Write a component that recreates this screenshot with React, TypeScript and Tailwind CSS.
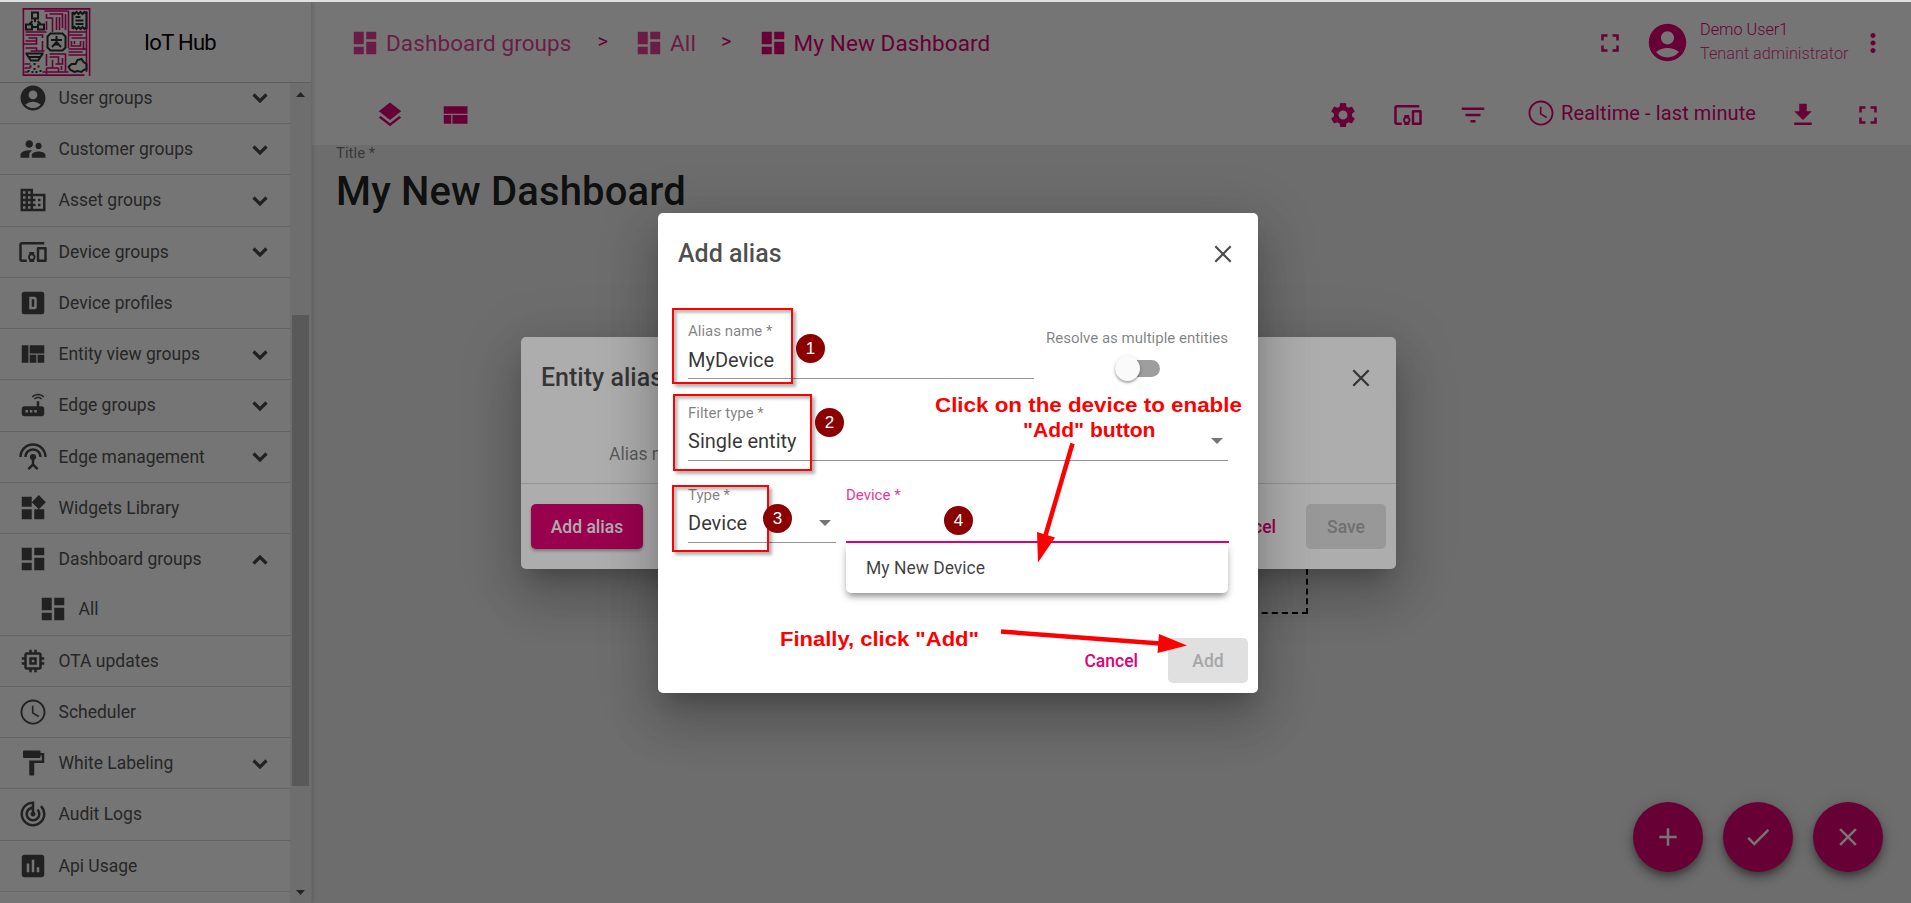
import type { ReactNode } from 'react';
import type { IconType } from 'react-icons';
import {
  MdAccountCircle,
  MdAdd,
  MdCheck,
  MdClose,
  MdDashboard,
  MdDevicesOther,
  MdDomain,
  MdFilterList,
  MdFullscreen,
  MdInsertChart,
  MdMemory,
  MdMoreVert,
  MdSettings,
  MdSettingsInputAntenna,
  MdSupervisorAccount,
  MdTrackChanges,
  MdViewQuilt,
  MdWidgets,
} from 'react-icons/md';

type GlyphProps = { className?: string; size?: number };

const glyph = (d: string) =>
  function Glyph({ className, size = 30 }: GlyphProps) {
    return (
      <svg viewBox="0 0 24 24" width={size} height={size} fill="currentColor" fillRule="evenodd" className={className}>
        <path d={d} />
      </svg>
    );
  };

const RouterIcon = glyph(
  'M20.2 5.9l.8-.8C19.6 3.7 17.8 3 16 3s-3.6.7-5 2.1l.8.8C13 4.8 14.5 4.2 16 4.2s3 .6 4.2 1.7zm-.9.8c-.9-.9-2.1-1.4-3.3-1.4s-2.4.5-3.3 1.4l.8.8c.7-.7 1.6-1 2.5-1 .9 0 1.8.3 2.5 1l.8-.8zM19 13h-2V9h-2v4H5c-1.1 0-2 .9-2 2v4c0 1.1.9 2 2 2h14c1.1 0 2-.9 2-2v-4c0-1.1-.9-2-2-2zM8 18H6v-2h2v2zm3.5 0h-2v-2h2v2zm3.5 0h-2v-2h2v2z',
);
const ProfileIcon = glyph(
  'M9 7h4a2 2 0 0 1 2 2v6a2 2 0 0 1-2 2H9zM11 9v6h2V9zM5 3h14a2 2 0 0 1 2 2v14a2 2 0 0 1-2 2H5a2 2 0 0 1-2-2V5a2 2 0 0 1 2-2z',
);
const ClockIcon = glyph(
  'M11.99 2C6.47 2 2 6.48 2 12s4.47 10 9.99 10C17.52 22 22 17.52 22 12S17.52 2 11.99 2zM12 20.5c-4.7 0-8.5-3.8-8.5-8.5S7.3 3.5 12 3.5s8.5 3.8 8.5 8.5-3.8 8.5-8.5 8.5zM12.4 7h-1.3v6l5.1 3.1.7-1.1-4.5-2.7z',
);
const RollerIcon = glyph(
  'M18 4V3c0-.55-.45-1-1-1H5c-.55 0-1 .45-1 1v4c0 .55.45 1 1 1h12c.55 0 1-.45 1-1V6h1v4H9v11c0 .55.45 1 1 1h2c.55 0 1-.45 1-1v-9h8V4h-3z',
);
const DownloadIcon = glyph('M19 9h-4V3H9v6H5l7 7 7-7zM5 18v2h14v-2H5z');
const CompactIcon = glyph('M3 19h6v-7H3v7zm7 0h12v-7H10v7zM3 5v6h19V5H3z');
const LayersIcon = glyph(
  'M11.99 18.54l-7.37-5.73L3 14.07l9 7 9-7-1.63-1.27-7.38 5.74zM12 16l7.36-5.73L21 9l-9-7-9 7 1.63 1.27L12 16z',
);

type NavEntry = {
  label: string;
  icon: IconType | typeof RouterIcon;
  arrow?: 'down' | 'up';
};

const NAV: NavEntry[] = [
  { label: 'User groups', icon: MdAccountCircle, arrow: 'down' },
  { label: 'Customer groups', icon: MdSupervisorAccount, arrow: 'down' },
  { label: 'Asset groups', icon: MdDomain, arrow: 'down' },
  { label: 'Device groups', icon: MdDevicesOther, arrow: 'down' },
  { label: 'Device profiles', icon: ProfileIcon },
  { label: 'Entity view groups', icon: MdViewQuilt, arrow: 'down' },
  { label: 'Edge groups', icon: RouterIcon, arrow: 'down' },
  { label: 'Edge management', icon: MdSettingsInputAntenna, arrow: 'down' },
  { label: 'Widgets Library', icon: MdWidgets },
  { label: 'Dashboard groups', icon: MdDashboard, arrow: 'up' },
  { label: 'OTA updates', icon: MdMemory },
  { label: 'Scheduler', icon: ClockIcon },
  { label: 'White Labeling', icon: RollerIcon, arrow: 'down' },
  { label: 'Audit Logs', icon: MdTrackChanges },
  { label: 'Api Usage', icon: MdInsertChart },
];

function Logo() {
  return (
    <svg viewBox="0 0 68 68" width={69} height={68} fill="none" className="shrink-0">
      <g stroke="#e20074" strokeWidth="1.6">
        <path d="M0 .9H68M.9 0V68M0 67.1H62M67.1 0V68M64 3V64M46 3V40M22 3H46M24 6V10H30V24M27 6H40V20M34 9V22M37 9V22M43 6V22M24 13V22M3 24H24M3 27H20V30M3 33H14M6 30H14V36H3M20 33V43M3 40H14V43M8 43H22M0 36H8M46 24H64M46 27H60M49 30H64M49 33V38H58V33M52 33V36M61 33V42M46 41H64M46 44H60M46 47H64M24 46V58M27 46H43V50M27 49H36V56M30 52V60M24 60H36M33 56H40V50M43 50V64M20 64H46M39 58V62M36 64V60M24 66V60M2 56H8M2 60H8M2 64H6" />
      </g>
      <g stroke="#303030" strokeWidth="2">
        <path d="M9.5 4.5h6v6h-6zM3.500 16.500h6v5h-6zM15.500 16.500h6v5h-6zM12.500 11v3M10.500 19h4M10 13l-3 3M15 13l3 3" />
        <path d="M50 4v17M64 4v17M50 4l2 2 2-2 2 2 2-2 2 2 2-2 2 2M50 21l2-2 2 2 2-2 2 2 2-2 2 2 2-2M53 9h5M53 12.500h8M53 16h8" />
        <path d="M28 25.500h12l3 3v11l-3 3H28l-3-3v-11z" />
        <path d="M28.500 32h11M34 28v6M34 34l-4.500 5M34 34l4.500 5M31 36.500h6" />
        <path d="M3 45.500h18M5 49h14M7.500 52.500h9M4 46l4 6M20 46l-4 6" />
        <path d="M12 55v2M8 57.500v2M16 57.500v2M12 60v2M6 62v2M18 62v2M10 63v2M14 63v2" />
        <path d="M48 62l-2-3 3-3 4 0 2-4 4-1 2 3 3 2v5l-3 1-2 2-4-1-3 1z" />
      </g>
    </svg>
  );
}

function Chevron({ up }: { up?: boolean }) {
  return (
    <svg width="30" height="30" viewBox="0 0 30 30" fill="none" className="mt-px stroke-current" strokeWidth="3.2">
      <path d={up ? 'M8.500 18.500L15 12L21.500 18.500' : 'M8.500 11.500L15 18L21.500 11.500'} />
    </svg>
  );
}

function NavItem({ entry }: { entry: NavEntry }) {
  const Icon = entry.icon;
  return (
    <div className="flex h-[50.25px] items-center pl-[18px] pr-[15px]">
      <Icon size={30} className="shrink-0" />
      <span className="ml-[10.500px] flex-1 text-[17.500px] leading-6 text-[#555]">{entry.label}</span>
      {entry.arrow && <Chevron up={entry.arrow === 'up'} />}
    </div>
  );
}

function Sidebar() {
  return (
    <aside className="z-10 flex w-[312px] shrink-0 flex-col border-r border-black/10 bg-white shadow-[0_0_5px_rgba(0,0,0,0.2)]">
      <div className="flex h-[81px] shrink-0 items-center border-b border-black/20 pl-[22px] pb-[1px]">
        <Logo />
        <span className="ml-[53px] mt-[3px] text-[22px] leading-8 tracking-[-0.7px]">IoT Hub</span>
      </div>
      <div className="flex min-h-0 flex-1">
        <nav className="-mt-[10.250px] flex-1 self-start text-[#4a4a4a] [clip-path:inset(10.250px_0_0_0)]">
          {NAV.map((entry) => (
            <div key={entry.label} className="border-b border-black/15">
              <NavItem entry={entry} />
              {entry.arrow === 'up' && (
                <div className="flex h-[50.25px] items-center pl-[38px]">
                  <MdDashboard size={30} />
                  <span className="ml-[10.500px] text-[17.500px] leading-6 text-[#555]">All</span>
                </div>
              )}
            </div>
          ))}
        </nav>
        <div className="flex w-[21px] flex-col items-center bg-[#f1f1f1]">
          <svg width="9" height="5" viewBox="0 0 9 5" className="mt-[9px] fill-[#505050]">
            <path d="M0 5L4.500 0L9 5z" />
          </svg>
          <div className="mt-[218px] h-[471px] w-[17px] bg-[#c1c1c1]" />
          <svg width="9" height="5" viewBox="0 0 9 5" className="mt-[104px] fill-[#505050]">
            <path d="M0 0L4.500 5L9 0z" />
          </svg>
        </div>
      </div>
    </aside>
  );
}

function TopBar() {
  return (
    <div className="flex h-[81px] items-center justify-between bg-white pl-[38px] pr-[23px] text-[#e20074]">
      <div className="flex items-center text-[22.500px] leading-8 tracking-[0.1px]">
        <div className="flex items-center opacity-75">
          <MdDashboard size={30} />
          <span className="ml-[6px]">Dashboard groups</span>
        </div>
        <span className="ml-[26px] -mt-[4px] text-[20px]">&gt;</span>
        <div className="ml-[26px] flex items-center opacity-75">
          <MdDashboard size={30} />
          <span className="ml-[6px]">All</span>
        </div>
        <span className="ml-[25px] -mt-[4px] text-[20px]">&gt;</span>
        <div className="ml-[26px] flex items-center">
          <MdDashboard size={30} />
          <span className="ml-[6px]">My New Dashboard</span>
        </div>
      </div>
      <div className="flex items-center">
        <MdFullscreen size={30} />
        <MdAccountCircle size={45} className="ml-[20px]" />
        <div className="-mt-[2px] ml-[10px] w-[158px] text-[16.250px] font-light leading-6">
          <div>Demo User1</div>
          <div className="opacity-80">Tenant administrator</div>
        </div>
        <MdMoreVert size={30} />
      </div>
    </div>
  );
}

function DashboardBar() {
  return (
    <div className="flex h-[62px] items-center justify-between bg-white pl-[63px] pr-[28px] pt-[2px] text-[#e20074]">
      <div className="flex items-center gap-[35px]">
        <LayersIcon />
        <CompactIcon />
      </div>
      <div className="flex items-center">
        <MdSettings size={30} />
        <MdDevicesOther size={30} className="ml-[35px]" />
        <MdFilterList size={30} className="ml-[35px]" />
        <div className="-mt-[4px] ml-[38px] flex w-[232px] items-center whitespace-nowrap">
          <ClockIcon />
          <span className="ml-[5px] text-[20px] leading-6 tracking-[0.1px]">Realtime - last minute</span>
        </div>
        <DownloadIcon className="ml-[30px]" />
        <MdFullscreen size={30} className="ml-[35px]" />
      </div>
    </div>
  );
}

function Fab({ children }: { children: ReactNode }) {
  return (
    <button className="flex size-[70px] items-center justify-center rounded-full bg-[#e20074] text-white shadow-[0_4px_6px_-1px_rgba(0,0,0,0.3),0_7px_12px_rgba(0,0,0,0.2),0_1px_22px_rgba(0,0,0,0.12)]">
      {children}
    </button>
  );
}

function Canvas() {
  return (
    <main className="relative flex-1 bg-[#eee] pl-[24px]">
      <div className="text-[15px] leading-[17px] text-black/50">Title *</div>
      <h1 className="mt-[6px] text-[40px] font-medium leading-[48px] tracking-[0.15px] text-black/87">
        My New Dashboard
      </h1>
      <div className="absolute left-[446px] top-[228px] h-[241px] w-[550px] border-2 border-dashed border-black" />
      <div className="absolute bottom-[31px] right-[28px] flex gap-[20px]">
        <Fab>
          <MdAdd size={30} />
        </Fab>
        <Fab>
          <MdCheck size={30} />
        </Fab>
        <Fab>
          <MdClose size={30} />
        </Fab>
      </div>
    </main>
  );
}

const DIALOG_SHADOW =
  'shadow-[0_14px_19px_-9px_rgba(0,0,0,0.2),0_30px_48px_4px_rgba(0,0,0,0.14),0_11px_58px_10px_rgba(0,0,0,0.12)]';

function ThinClose() {
  return (
    <svg width="18" height="18" viewBox="0 0 18 18" className="stroke-current" strokeWidth="2.2">
      <path d="M1.300 1.300L16.700 16.700M16.700 1.300L1.300 16.700" />
    </svg>
  );
}

function EntityAliasesDialog() {
  return (
    <section className={`absolute left-[521px] top-[335px] flex h-[232px] w-[875px] flex-col rounded-[5px] bg-white ${DIALOG_SHADOW}`}>
      <header className="flex h-[80px] items-center justify-between pl-[20px] pr-[26px] pt-[2px] text-black/70">
        <h2 className="text-[25px] font-medium leading-8">Entity aliases</h2>
        <ThinClose />
      </header>
      <div className="flex-1 pl-[88px] pt-[25px] text-[17.500px] leading-6 text-black/50">Alias name</div>
      <footer className="flex h-[86px] items-center border-t border-black/15 px-[10px] text-[17.500px] font-medium">
        <button className="h-[45px] w-[112px] rounded-[5px] bg-[#e20074] pt-px text-white shadow-[0_2px_3px_rgba(0,0,0,0.3)]">
          Add alias
        </button>
        <span className="ml-auto mr-[30px] mt-px text-[#e20074]">Cancel</span>
        <button className="h-[45px] w-[80px] rounded-[5px] bg-[#e0e0e0] pt-px text-[#a6a6a6]">Save</button>
      </footer>
    </section>
  );
}

function Field({
  label,
  value,
  arrow,
  active,
  className,
}: {
  label: string;
  value?: string;
  arrow?: boolean;
  active?: boolean;
  className: string;
}) {
  return (
    <div className={`flex h-[58px] flex-col pt-px ${active ? 'border-b-2 border-[#e20074]' : 'border-b border-[#949494]'} ${className}`}>
      <div className={`text-[15px] leading-[18px] ${active ? 'text-[#e20074]/80' : 'text-black/50'}`}>{label}</div>
      <div className={`flex items-center justify-between pr-[5px] ${arrow ? 'mt-[7px]' : 'mt-[8px]'}`}>
        <span className="h-6 text-[20px] leading-6 text-black/80">{value}</span>
        {arrow && (
          <svg width="12" height="6" viewBox="0 0 12 6" className="fill-[#757575]">
            <path d="M0 0H12L6 6z" />
          </svg>
        )}
      </div>
    </div>
  );
}

function AddAliasDialog() {
  return (
    <section className={`absolute left-[658px] top-[211px] flex h-[480px] w-[600px] flex-col rounded-[5px] bg-white ${DIALOG_SHADOW}`}>
      <header className="flex h-[80px] items-center justify-between pl-[20px] pr-[26px] pt-[2px] text-black/70">
        <h2 className="text-[25px] font-medium leading-8">Add alias</h2>
        <ThinClose />
      </header>
      <div className="flex flex-1 flex-col pl-[30px] pr-[30px] pt-[28px]">
        <div className="flex h-[58px] justify-between">
          <Field label="Alias name *" value="MyDevice" className="w-[346px]" />
          <div className="flex flex-col items-center pt-[7px]">
            <span className="text-[15px] leading-[20px] text-black/50">Resolve as multiple entities</span>
            <div className="mt-[9px] ml-[2px] flex h-[25px] w-[45px] items-center">
              <div className="flex h-[17px] w-[45px] items-center rounded-full bg-[#9e9e9e]">
                <div className="size-[25px] rounded-full bg-[#fafafa] shadow-[0_2px_2px_rgba(0,0,0,0.25),0_1px_4px_rgba(0,0,0,0.15)]" />
              </div>
            </div>
          </div>
        </div>
        <Field label="Filter type *" value="Single entity" arrow className="mt-[24px] w-full" />
        <div className="mt-[24px] flex gap-[10px]">
          <Field label="Type *" value="Device" arrow className="w-[148px]" />
          <div className="w-[382px]">
            <Field label="Device *" active className="w-[383px]" />
            <div className="flex h-[50px] items-center rounded-b-[5px] bg-white pl-[20px] text-[17.500px] text-black/75 shadow-[0_5px_6px_-2px_rgba(0,0,0,0.35),0_3px_10px_rgba(0,0,0,0.15)]">
              My New Device
            </div>
          </div>
        </div>
      </div>
      <footer className="flex h-[65px] items-center justify-end pr-[10px] text-[17.500px] font-medium">
        <span className="mr-[30px] mt-px text-[#e20074]">Cancel</span>
        <button className="h-[45px] w-[80px] rounded-[5px] bg-[#e0e0e0] pt-px text-[#a6a6a6]">Add</button>
      </footer>
    </section>
  );
}

function Marker({ n, className }: { n: number; className: string }) {
  return (
    <div
      className={`absolute flex size-[29px] items-center justify-center rounded-full bg-[#8b0000] font-['Liberation_Sans',sans-serif] text-[17px] text-white ${className}`}
    >
      {n}
    </div>
  );
}

function Annotations() {
  const box = 'absolute border-2 border-[#ff0000] shadow-[3px_3px_3px_rgba(0,0,0,0.3),inset_3px_3px_3px_rgba(0,0,0,0.25)]';
  const note =
    "absolute origin-left whitespace-nowrap font-['Liberation_Sans',sans-serif] text-[20px] font-bold leading-[25px] text-[#ff0000]";
  return (
    <div className="pointer-events-none absolute inset-0 z-40">
      <div className={`${box} left-[672px] top-[308px] h-[76px] w-[121px]`} />
      <div className={`${box} left-[673px] top-[394px] h-[77px] w-[139px]`} />
      <div className={`${box} left-[672px] top-[485px] h-[67px] w-[97px]`} />
      <Marker n={1} className="left-[796px] top-[334px]" />
      <Marker n={2} className="left-[815px] top-[408px]" />
      <Marker n={3} className="left-[763px] top-[504px]" />
      <Marker n={4} className="left-[944px] top-[506px]" />
      <p className={`${note} left-[935px] top-[393px] scale-x-[1.118]`}>Click on the device to enable</p>
      <p className={`${note} left-[1023px] top-[418px] scale-x-[1.055]`}>"Add" button</p>
      <p className={`${note} left-[780px] top-[627px] scale-x-[1.1]`}>Finally, click "Add"</p>
      <svg width="1911" height="903" viewBox="0 0 1911 903" className="absolute inset-0 fill-[#ff0000] stroke-[#ff0000]">
        <path d="M1072.500 443.500L1045 537" strokeWidth="4.500" />
        <path d="M1038 562.500L1037 532L1055 537.500z" stroke="none" />
        <path d="M1001 631.500L1160 643.500" strokeWidth="4.500" />
        <path d="M1187 645.500L1159 634L1157.500 653z" stroke="none" />
      </svg>
    </div>
  );
}

export default function App() {
  return (
    <div className="relative flex h-[903px] w-[1911px] flex-col overflow-hidden bg-[#dde1e2] pt-[2px] font-[Roboto,sans-serif] text-black">
      <div className="relative flex min-h-0 flex-1 overflow-hidden bg-white">
        <Sidebar />
        <div className="flex min-w-0 flex-1 flex-col">
          <TopBar />
          <DashboardBar />
          <Canvas />
        </div>
        <div className="absolute inset-0 z-20 bg-black/32">
          <EntityAliasesDialog />
        </div>
        <div className="absolute inset-0 z-30 bg-black/32">
          <AddAliasDialog />
        </div>
      </div>
      <Annotations />
    </div>
  );
}
